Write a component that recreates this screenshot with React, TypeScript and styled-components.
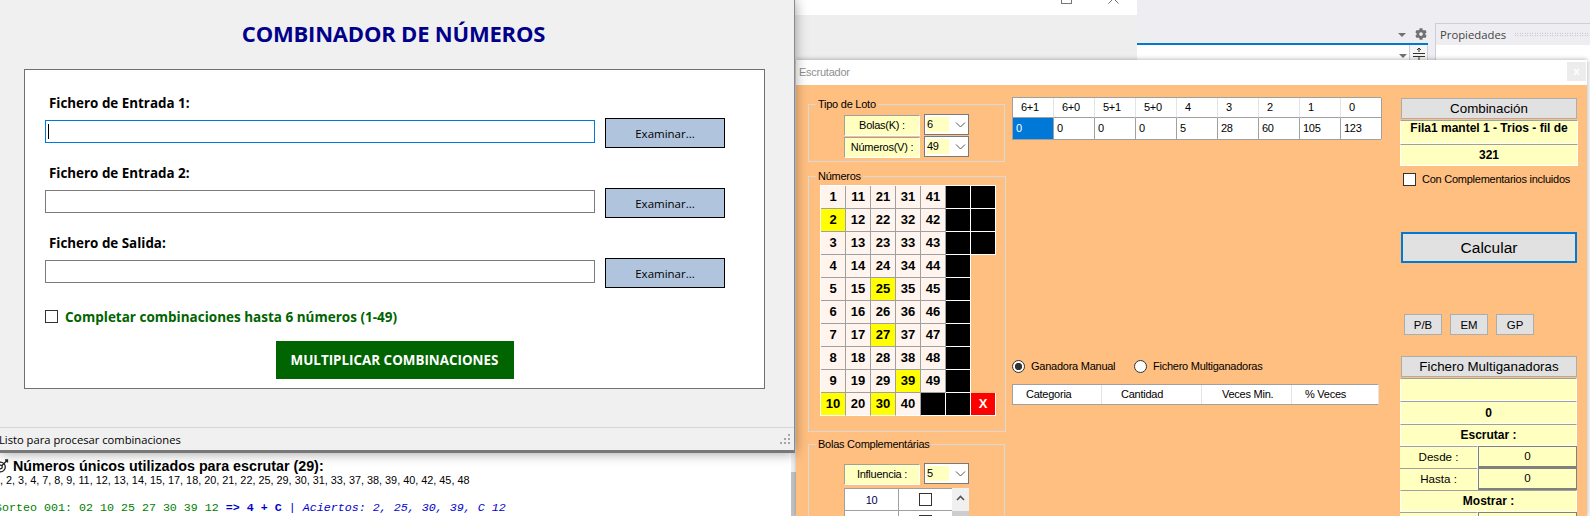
import styled, { createGlobalStyle } from 'styled-components'
import { FaCog } from 'react-icons/fa'

const GlobalStyle = createGlobalStyle`
  html, body {
    margin: 0;
    padding: 0;
    background: #f4f4f6;
  }
  * {
    box-sizing: border-box;
  }
`

const uiFont = `'Open Sans', 'Noto Sans', sans-serif`
const formFont = `'Liberation Sans', Arial, sans-serif`
const yellow = '#ffffc0'
const inset = '#a0a0a0'

const Desktop = styled.div`
  position: relative;
  width: 1590px;
  height: 516px;
  overflow: hidden;
  background: #f4f4f6;
`

/* ---------- windows behind ---------- */

const MiddleWindow = styled.div`
  position: absolute;
  left: 795px;
  top: 0;
  width: 342px;
  height: 62px;
  background: #eeeeee;
  box-shadow: 1px 0 3px rgba(0, 0, 0, 0.35);
`

const MiddleTitle = styled.div`
  height: 15px;
  background: #ffffff;
  display: flex;
  justify-content: flex-end;
  align-items: flex-start;
  gap: 36px;
  padding-right: 18px;
  overflow: hidden;
  svg {
    margin-top: -7px;
  }
`

const StudioWindow = styled.div`
  position: absolute;
  left: 1137px;
  top: 0;
  width: 453px;
  height: 62px;
  background: #eeeef2;
  display: flex;
  gap: 7px;
`

const StudioPane = styled.div`
  width: 291px;
  display: flex;
  flex-direction: column;
`

const StudioTools = styled.div`
  height: 43px;
  padding: 24px 1px 0 0;
  display: flex;
  align-items: center;
  justify-content: flex-end;
  gap: 9px;
  color: #717171;
`

const DropArrow = styled.span`
  width: 0;
  height: 0;
  border-left: 4px solid transparent;
  border-right: 4px solid transparent;
  border-top: 4px solid #717171;
  margin-top: 3px;
`

const StudioBody = styled.div`
  flex: 1;
  border-top: 2px solid #007acc;
  background: #ffffff;
  display: flex;
  justify-content: flex-end;
  align-items: flex-start;
  gap: 2px;
`

const BodyArrow = styled(DropArrow)`
  margin-top: 9px;
`

const SplitBox = styled.div`
  width: 19px;
  height: 100%;
  border-left: 1px solid #cccedb;
  border-right: 1px solid #cccedb;
  background: #f5f5f5;
  display: flex;
  justify-content: center;
  padding-top: 2px;
`

const PropsPane = styled.div`
  flex: 1;
  margin-top: 23px;
  border-left: 1px solid #cccedb;
  border-top: 1px solid #cccedb;
  background: #ffffff;
`

const PropsTitle = styled.div`
  height: 21px;
  background: #eeeef2;
  padding-left: 4px;
  display: flex;
  align-items: center;
  gap: 8px;
  font: 11.3px ${uiFont};
  color: #444444;
`

const Dots = styled.span`
  flex: 1;
  height: 5px;
  background-image: radial-gradient(#a8a8b4 0.6px, transparent 0.7px);
  background-size: 2.5px 2.5px;
`

/* ---------- console text under the combiner ---------- */

const ConsolePanel = styled.div`
  position: absolute;
  left: 0;
  top: 453px;
  width: 796px;
  height: 63px;
  background: #ffffff;
  display: flex;
  overflow: hidden;
`

const ConsoleText = styled.div`
  flex: 1;
  padding: 5px 0 0;
  margin-left: -6px;
  min-width: 0;
`

const ConsoleHeading = styled.div`
  display: flex;
  align-items: center;
  gap: 4px;
  height: 15px;
  font: bold 14.3px ${formFont};
  color: #000000;
  white-space: nowrap;
`

const ConsoleList = styled.div`
  height: 14px;
  margin-top: 0;
  font: 10.85px ${formFont};
  color: #000000;
  white-space: nowrap;
  line-height: 14px;
`

const ConsoleDraw = styled.div`
  margin-top: 14px;
  margin-left: 1px;
  font: 11.67px 'Liberation Mono', 'DejaVu Sans Mono', monospace;
  white-space: nowrap;
`

const DrawGreen = styled.span`
  color: #008000;
`

const DrawBlue = styled.span<{ $italic?: boolean }>`
  color: #0000cd;
  font-style: ${p => (p.$italic ? 'italic' : 'normal')};
  font-weight: ${p => (p.$italic ? 'normal' : 'bold')};
`

const ConsoleScroll = styled.div`
  width: 5px;
  background: #f0f0f0;
  padding-top: 19px;
`

const ConsoleThumb = styled.div`
  height: 100%;
  background: #c2c2c2;
`

/* ---------- combiner window ---------- */

const CombinerWindow = styled.div`
  position: absolute;
  left: 0;
  top: 0;
  width: 795px;
  height: 453px;
  z-index: 3;
  background: #f0f0f0;
  border-right: 1px solid #8a8a8a;
  border-bottom: 3px solid #787878;
  box-shadow: 0 0 12px rgba(0, 0, 0, 0.4);
  display: flex;
  flex-direction: column;
  font-family: ${uiFont};
`

const Title = styled.h1`
  margin: 0;
  height: 69px;
  padding: 17px 7px 0 0;
  text-align: center;
  font: bold 22px/32px ${uiFont};
  letter-spacing: -0.2px;
  color: #00008b;
`

const FormPanel = styled.div`
  margin-left: 24px;
  width: 741px;
  height: 320px;
  background: #ffffff;
  border: 1px solid #707070;
  padding: 24px 0 0 20px;
`

const FileField = styled.div`
  height: 70px;
`

const FieldLabel = styled.label`
  display: block;
  height: 24px;
  padding: 0 0 0 4px;
  font: bold 13.4px/18px ${uiFont};
  color: #000000;
`

const FieldRow = styled.div`
  display: flex;
  gap: 10px;
`

const PathInput = styled.div<{ $focused?: boolean }>`
  width: 550px;
  height: 23px;
  margin-top: 2px;
  background: #ffffff;
  border: 1px solid ${p => (p.$focused ? '#0078d7' : '#7a7a7a')};
  padding: 3px 2px;
`

const Caret = styled.div`
  width: 1px;
  height: 15px;
  background: #000000;
`

const BrowseButton = styled.button`
  width: 120px;
  height: 30px;
  padding: 0;
  background: #b0c4de;
  border: 1px solid #000000;
  font: 11.5px ${uiFont};
  color: #000000;
`

const CheckLine = styled.label`
  display: flex;
  align-items: center;
  gap: 7px;
  height: 14px;
  margin-top: 5px;
  padding-top: 1px;
  font: bold 13.5px ${uiFont};
  color: #006400;
`

const CheckBox = styled.span`
  flex: none;
  width: 13px;
  height: 13px;
  background: #ffffff;
  border: 1px solid #333333;
`

const ActionWrap = styled.div`
  display: flex;
  justify-content: center;
  margin: 18px 0 0 0;
  padding-right: 20px;
`

const ActionButton = styled.button`
  width: 238px;
  height: 38px;
  padding: 0;
  border: 0;
  background: #006400;
  color: #ffffff;
  font: bold 13.4px ${uiFont};
`

const StatusBar = styled.div`
  margin-top: auto;
  height: 23px;
  border-top: 1px solid #d7d7d7;
  display: flex;
  align-items: center;
  justify-content: space-between;
  padding-right: 3px;
  font: 11.2px ${uiFont};
  color: #000000;
`

const StatusText = styled.span`
  margin-left: -1px;
`

/* ---------- escrutador window ---------- */

const ScrutinyWindow = styled.div`
  position: absolute;
  left: 796px;
  top: 60px;
  width: 791px;
  height: 456px;
  z-index: 2;
  background: #ffbf80;
  box-shadow: 0 -1px 4px rgba(0, 0, 0, 0.25);
  display: flex;
  flex-direction: column;
  overflow: hidden;
  font-family: ${formFont};
  font-size: 11px;
  letter-spacing: -0.25px;
  color: #000000;
`

const ScrutinyTitle = styled.div`
  flex: none;
  height: 25px;
  background: #ffffff;
  display: flex;
  justify-content: space-between;
  align-items: flex-start;
  padding: 6px 1px 0 3px;
  line-height: 13px;
  color: #8f8f8f;
`

const CloseBox = styled.span`
  width: 19px;
  height: 19px;
  margin-top: -4px;
  background: #ececec;
  color: #ffffff;
  text-align: center;
  font: bold 11px/18px ${formFont};
`

const ScrutinyBody = styled.div`
  flex: 1;
  display: grid;
  grid-template-columns: 197px 369px 178px;
  column-gap: 7px;
  padding: 12px 0 0 12px;
`

const LeftColumn = styled.div`
  display: flex;
  flex-direction: column;
`

const GroupBox = styled.fieldset<{ $height: number; $width: number; $gapTop?: number }>`
  margin: ${p => p.$gapTop ?? 0}px 0 0;
  padding: 0 0 0 7px;
  width: ${p => p.$width}px;
  height: ${p => p.$height}px;
  flex: none;
  border: 1px solid #d9d9d9;
  min-width: 0;
`

const GroupLegend = styled.legend`
  padding: 0 2px;
  line-height: 14px;
`

const OptionGrid = styled.div<{ $top: number }>`
  display: grid;
  grid-template-columns: 76px 45px;
  column-gap: 4px;
  row-gap: 1px;
  margin: ${p => p.$top}px 0 0 28px;
`

const OptionLabel = styled.div`
  height: 21px;
  background: ${yellow};
  border-top: 1px solid ${inset};
  border-left: 1px solid ${inset};
  border-right: 1px solid #ffffff;
  border-bottom: 1px solid #ffffff;
  line-height: 19px;
  text-align: center;
`

const Combo = styled.div`
  height: 21px;
  background: #ffffff;
  border: 1px solid #7a7a7a;
  display: flex;
  align-items: center;
  padding: 2px 0 2px 2px;
  margin-top: -1px;
`

const ComboValue = styled.span`
  width: 22px;
  height: 100%;
  background: ${yellow};
  line-height: 15px;
`

const ComboArrow = styled.svg`
  margin-left: 6px;
`

const NumberGrid = styled.div`
  display: grid;
  grid-template-columns: repeat(7, 25px);
  grid-auto-rows: 23px;
  width: 176px;
  margin: 2px 0 0 4px;
  border-left: 1px solid #ffffff;
  border-top: 1px solid #ffffff;
`

const Ball = styled.div<{ $kind: 'plain' | 'hit' | 'off' | 'clear' }>`
  display: flex;
  align-items: center;
  justify-content: center;
  padding-bottom: 1px;
  background: ${p =>
    p.$kind === 'hit' ? '#ffff00' : p.$kind === 'off' ? '#000000' : p.$kind === 'clear' ? '#ff0000' : '#fff5ee'};
  color: ${p => (p.$kind === 'clear' ? '#ffffff' : '#000000')};
  border-right: 1px solid ${p => (p.$kind === 'off' || p.$kind === 'clear' ? '#ffffff' : inset)};
  border-bottom: 1px solid ${p => (p.$kind === 'off' || p.$kind === 'clear' ? '#ffffff' : inset)};
  font-size: 13px;
  font-weight: bold;
  letter-spacing: 0;

  &:nth-last-child(-n + 7) {
    border-bottom-color: #ffffff;
  }
`

const SideList = styled.div`
  display: grid;
  grid-template-columns: 108px 17px;
  margin: 3px 0 0 28px;
`

const SideRows = styled.div`
  background: #ffffff;
  border-top: 1px solid ${inset};
  border-left: 1px solid ${inset};
`

const SideRow = styled.div`
  display: grid;
  grid-template-columns: 54px 53px;
  height: 22px;
  border-bottom: 1px solid ${inset};
`

const SideNumber = styled.div`
  border-right: 1px solid ${inset};
  display: flex;
  align-items: center;
  justify-content: center;
  color: #00005a;
`

const SideCheck = styled.div`
  display: flex;
  align-items: center;
  justify-content: center;
`

const SideScroll = styled.div`
  background: #f0f0f0;
  display: flex;
  flex-direction: column;
  align-items: center;
  padding-top: 7px;
`

const SideThumb = styled.div`
  width: 100%;
  height: 40px;
  margin-top: 10px;
  background: #cdcdcd;
`

const CenterColumn = styled.div`
  display: flex;
  flex-direction: column;
`

const PrizeTable = styled.div`
  width: 369px;
  display: grid;
  grid-template-columns: repeat(9, 41px);
  background: #ffffff;
  border-top: 1px solid ${inset};
  border-bottom: 1px solid ${inset};
  border-left: 1px solid ${inset};
`

const PrizeHead = styled.div`
  height: 20px;
  border-right: 1px solid #e4e4e4;
  border-bottom: 1px solid ${inset};
  padding-left: 8px;
  line-height: 19px;

  &:nth-child(9) {
    border-right-color: ${inset};
  }
`

const PrizeCell = styled.div<{ $selected?: boolean }>`
  height: 21px;
  border-right: 1px solid ${inset};
  padding-left: 3px;
  line-height: 20px;
  background: ${p => (p.$selected ? '#0078d7' : '#ffffff')};
  color: ${p => (p.$selected ? '#ffffff' : '#000000')};
`

const RadioRow = styled.div`
  display: flex;
  align-items: center;
  height: 14px;
  margin-top: 219px;
`

const RadioOption = styled.label`
  display: flex;
  align-items: center;
  gap: 6px;
  width: 122px;
  white-space: nowrap;
`

const RadioMark = styled.span<{ $on?: boolean }>`
  flex: none;
  width: 13px;
  height: 13px;
  border-radius: 50%;
  border: 1px solid #333333;
  background: ${p =>
    p.$on ? 'radial-gradient(circle, #333333 0 3.4px, #ffffff 3.9px)' : '#ffffff'};
`

const CategoryTable = styled.div`
  width: 366px;
  height: 21px;
  margin-top: 11px;
  display: grid;
  grid-template-columns: 89px 100px 90px 87px;
  background: #ffffff;
  border-top: 1px solid ${inset};
  border-bottom: 1px solid ${inset};
  border-left: 1px solid ${inset};
`

const CategoryHead = styled.div<{ $pad: number }>`
  border-right: 1px solid #e4e4e4;
  padding-left: ${p => p.$pad}px;
  line-height: 19px;
`

const RightColumn = styled.div`
  display: flex;
  flex-direction: column;
  width: 178px;
  margin-left: 12px;
`

const WideButton = styled.button`
  flex: none;
  width: 176px;
  height: 21px;
  margin: 1px 0 0 1px;
  padding: 0;
  background: #e1e1e1;
  border: 1px solid #adadad;
  font: 13.33px ${formFont};
  color: #000000;
`

const YellowCell = styled.div<{ $height: number; $bold?: boolean; $top?: boolean }>`
  height: ${p => p.$height}px;
  background: ${yellow};
  border-top: 1px solid ${inset};
  border-left: 1px solid #ffffff;
  border-right: 1px solid #ffffff;
  border-bottom: 1px solid #ffffff;
  text-align: center;
  font-size: 12px;
  letter-spacing: 0;
  font-weight: ${p => (p.$bold ? 'bold' : 'normal')};
  line-height: ${p => (p.$top ? 14 : p.$height - 1)}px;
`

const TopCells = styled.div`
  margin-top: 1px;
`

const SmallCheck = styled.label`
  display: flex;
  align-items: center;
  gap: 6px;
  height: 14px;
  margin: 6px 0 0 3px;
  white-space: nowrap;
`

const CalcButton = styled.button`
  flex: none;
  width: 176px;
  height: 31px;
  margin: 46px 0 0 1px;
  padding: 0;
  background: #e1e1e1;
  border: 2px solid #0078d7;
  font: 15.5px ${formFont};
  color: #000000;
`

const MiniButtons = styled.div`
  display: flex;
  gap: 8px;
  margin: 51px 0 0 4px;
`

const MiniButton = styled.button`
  width: 38px;
  height: 21px;
  padding: 0;
  background: #e1e1e1;
  border: 1px solid #adadad;
  font: 11.4px ${formFont};
  color: #000000;
`

const MultiButton = styled(WideButton)`
  margin-top: 21px;
`

const MultiCells = styled.div`
  margin-top: 1px;
  width: 177px;
`

const RangeRow = styled.div`
  display: grid;
  grid-template-columns: 78px 99px;
`

const RangeLabel = styled.div`
  height: 22px;
  background: ${yellow};
  border-top: 1px solid ${inset};
  border-right: 1px solid #ffffff;
  font-size: 11.6px;
  letter-spacing: 0;
  line-height: 20px;
  text-align: center;
`

const RangeValue = styled.div`
  height: 22px;
  background: ${yellow};
  border: 1px solid #808080;
  border-bottom-width: 2px;
  font-size: 11.6px;
  letter-spacing: 0;
  line-height: 17px;
  text-align: center;
`

type BallValue = number | 'off' | 'clear' | 'gap'

const numberRows: BallValue[][] = Array.from({ length: 10 }, (_, row) => {
  const base: BallValue[] = [1, 11, 21, 31, 41].map(n => n + row)
  if (row < 3) return [...base, 'off', 'off']
  if (row < 9) return [...base, 'off', 'gap']
  return [10, 20, 30, 40, 'off', 'off', 'clear']
})

const hits = [2, 25, 27, 39, 10, 30]

const prizeHeads = ['6+1', '6+0', '5+1', '5+0', '4', '3', '2', '1', '0']
const prizeValues = ['0', '0', '0', '0', '5', '28', '60', '105', '123']

const categoryHeads = [
  { label: 'Categoria', pad: 13 },
  { label: 'Cantidad', pad: 19 },
  { label: 'Veces Min.', pad: 20 },
  { label: '% Veces', pad: 13 },
]

const files = ['Fichero de Entrada 1:', 'Fichero de Entrada 2:', 'Fichero de Salida:']

const Chevron = () => (
  <ComboArrow width="11" height="6" viewBox="0 0 11 6" fill="none" stroke="#555" strokeWidth="1">
    <path d="M1 0.5 L5.5 5 L10 0.5" />
  </ComboArrow>
)

const Grip = () => (
  <svg width="11" height="11" viewBox="0 0 11 11" fill="#a6a6a6">
    <rect x="8" y="0" width="2" height="2" />
    <rect x="4" y="4" width="2" height="2" />
    <rect x="8" y="4" width="2" height="2" />
    <rect x="0" y="8" width="2" height="2" />
    <rect x="4" y="8" width="2" height="2" />
    <rect x="8" y="8" width="2" height="2" />
  </svg>
)

function Combiner() {
  return (
    <CombinerWindow>
      <Title>COMBINADOR DE NÚMEROS</Title>
      <FormPanel>
        {files.map((label, i) => (
          <FileField key={label}>
            <FieldLabel>{label}</FieldLabel>
            <FieldRow>
              <PathInput $focused={i === 0}>{i === 0 && <Caret />}</PathInput>
              <BrowseButton>Examinar...</BrowseButton>
            </FieldRow>
          </FileField>
        ))}
        <CheckLine>
          <CheckBox />
          Completar combinaciones hasta 6 números (1-49)
        </CheckLine>
        <ActionWrap>
          <ActionButton>MULTIPLICAR COMBINACIONES</ActionButton>
        </ActionWrap>
      </FormPanel>
      <StatusBar>
        <StatusText>Listo para procesar combinaciones</StatusText>
        <Grip />
      </StatusBar>
    </CombinerWindow>
  )
}

function Console() {
  return (
    <ConsolePanel>
      <ConsoleText>
        <ConsoleHeading>
          <svg width="15" height="14" viewBox="0 0 15 14" fill="none" stroke="#222" strokeWidth="1.3">
            <circle cx="6.5" cy="8" r="4.8" />
            <circle cx="6.5" cy="8" r="1.8" />
            <path d="M8 6.5 L13 1.5 M11 1 L14 1 M13.5 0.5 L13.5 3.5" />
          </svg>
          Números únicos utilizados para escrutar (29):
        </ConsoleHeading>
        <ConsoleList>
          1, 2, 3, 4, 7, 8, 9, 11, 12, 13, 14, 15, 17, 18, 20, 21, 22, 25, 29, 30, 31, 33, 37, 38, 39, 40, 42, 45, 48
        </ConsoleList>
        <ConsoleDraw>
          <DrawGreen>Sorteo 001: 02 10 25 27 30 39 12 </DrawGreen>
          <DrawBlue>=&gt; 4 + C</DrawBlue>
          <DrawBlue $italic> | Aciertos: 2, 25, 30, 39, C 12</DrawBlue>
        </ConsoleDraw>
      </ConsoleText>
      <ConsoleScroll>
        <ConsoleThumb />
      </ConsoleScroll>
    </ConsolePanel>
  )
}

function Scrutiny() {
  return (
    <ScrutinyWindow>
      <ScrutinyTitle>
        Escrutador
        <CloseBox>x</CloseBox>
      </ScrutinyTitle>
      <ScrutinyBody>
        <LeftColumn>
          <GroupBox $height={65} $width={197}>
            <GroupLegend>Tipo de Loto</GroupLegend>
            <OptionGrid $top={4}>
              <OptionLabel>Bolas(K) :</OptionLabel>
              <Combo>
                <ComboValue>6</ComboValue>
                <Chevron />
              </Combo>
              <OptionLabel>Números(V) :</OptionLabel>
              <Combo>
                <ComboValue>49</ComboValue>
                <Chevron />
              </Combo>
            </OptionGrid>
          </GroupBox>

          <GroupBox $height={263} $width={198} $gapTop={7}>
            <GroupLegend>Números</GroupLegend>
            <NumberGrid>
              {numberRows.flat().map((value, i) => {
                if (value === 'gap') return <span key={i} />
                if (value === 'off') return <Ball key={i} $kind="off" />
                if (value === 'clear')
                  return (
                    <Ball key={i} $kind="clear">
                      X
                    </Ball>
                  )
                return (
                  <Ball key={i} $kind={hits.includes(value) ? 'hit' : 'plain'}>
                    {value}
                  </Ball>
                )
              })}
            </NumberGrid>
          </GroupBox>

          <GroupBox $height={120} $width={197} $gapTop={5}>
            <GroupLegend>Bolas Complementárias</GroupLegend>
            <OptionGrid $top={13}>
              <OptionLabel>Influencia :</OptionLabel>
              <Combo>
                <ComboValue>5</ComboValue>
                <Chevron />
              </Combo>
            </OptionGrid>
            <SideList>
              <SideRows>
                <SideRow>
                  <SideNumber>10</SideNumber>
                  <SideCheck>
                    <CheckBox />
                  </SideCheck>
                </SideRow>
                <SideRow>
                  <SideNumber />
                  <SideCheck>
                    <CheckBox />
                  </SideCheck>
                </SideRow>
              </SideRows>
              <SideScroll>
                <svg width="9" height="6" viewBox="0 0 9 6" fill="none" stroke="#555" strokeWidth="1.6">
                  <path d="M1 5 L4.5 1.5 L8 5" />
                </svg>
                <SideThumb />
              </SideScroll>
            </SideList>
          </GroupBox>
        </LeftColumn>

        <CenterColumn>
          <PrizeTable>
            {prizeHeads.map(h => (
              <PrizeHead key={h}>{h}</PrizeHead>
            ))}
            {prizeValues.map((v, i) => (
              <PrizeCell key={i} $selected={i === 0}>
                {v}
              </PrizeCell>
            ))}
          </PrizeTable>
          <RadioRow>
            <RadioOption>
              <RadioMark $on />
              Ganadora Manual
            </RadioOption>
            <RadioOption>
              <RadioMark />
              Fichero Multiganadoras
            </RadioOption>
          </RadioRow>
          <CategoryTable>
            {categoryHeads.map(c => (
              <CategoryHead key={c.label} $pad={c.pad}>
                {c.label}
              </CategoryHead>
            ))}
          </CategoryTable>
        </CenterColumn>

        <RightColumn>
          <WideButton>Combinación</WideButton>
          <TopCells>
            <YellowCell $height={24} $bold $top>
              Fila1 mantel 1 - Trios - fil de
            </YellowCell>
            <YellowCell $height={22} $bold>
              321
            </YellowCell>
          </TopCells>
          <SmallCheck>
            <CheckBox />
            Con Complementarios incluidos
          </SmallCheck>
          <CalcButton>Calcular</CalcButton>
          <MiniButtons>
            <MiniButton>P/B</MiniButton>
            <MiniButton>EM</MiniButton>
            <MiniButton>GP</MiniButton>
          </MiniButtons>
          <MultiButton>Fichero Multiganadoras</MultiButton>
          <MultiCells>
            <YellowCell $height={23} />
            <YellowCell $height={23} $bold>
              0
            </YellowCell>
            <YellowCell $height={22} $bold>
              Escrutar :
            </YellowCell>
            <RangeRow>
              <RangeLabel>Desde :</RangeLabel>
              <RangeValue>0</RangeValue>
            </RangeRow>
            <RangeRow>
              <RangeLabel>Hasta :</RangeLabel>
              <RangeValue>0</RangeValue>
            </RangeRow>
            <YellowCell $height={22} $bold>
              Mostrar :
            </YellowCell>
            <RangeRow>
              <RangeLabel />
              <RangeValue />
            </RangeRow>
          </MultiCells>
        </RightColumn>
      </ScrutinyBody>
    </ScrutinyWindow>
  )
}

export default function App() {
  return (
    <Desktop>
      <GlobalStyle />
      <MiddleWindow>
        <MiddleTitle>
          <svg width="11" height="11" viewBox="0 0 11 11" fill="none" stroke="#777">
            <rect x="0.5" y="0.5" width="10" height="10" />
          </svg>
          <svg width="11" height="11" viewBox="0 0 11 11" fill="none" stroke="#777">
            <path d="M0.5 0.5 L10.5 10.5 M10.5 0.5 L0.5 10.5" />
          </svg>
        </MiddleTitle>
      </MiddleWindow>
      <StudioWindow>
        <StudioPane>
          <StudioTools>
            <DropArrow />
            <FaCog size={12} />
          </StudioTools>
          <StudioBody>
            <BodyArrow />
            <SplitBox>
              <svg width="12" height="14" viewBox="0 0 12 14" fill="none" stroke="#333">
                <path d="M0 6.5 H12 M0 9.5 H12 M6 1 V5 M4 3 L6 1 L8 3 M6 10 V14" />
              </svg>
            </SplitBox>
          </StudioBody>
        </StudioPane>
        <PropsPane>
          <PropsTitle>
            Propiedades
            <Dots />
          </PropsTitle>
        </PropsPane>
      </StudioWindow>
      <Console />
      <Scrutiny />
      <Combiner />
    </Desktop>
  )
}
